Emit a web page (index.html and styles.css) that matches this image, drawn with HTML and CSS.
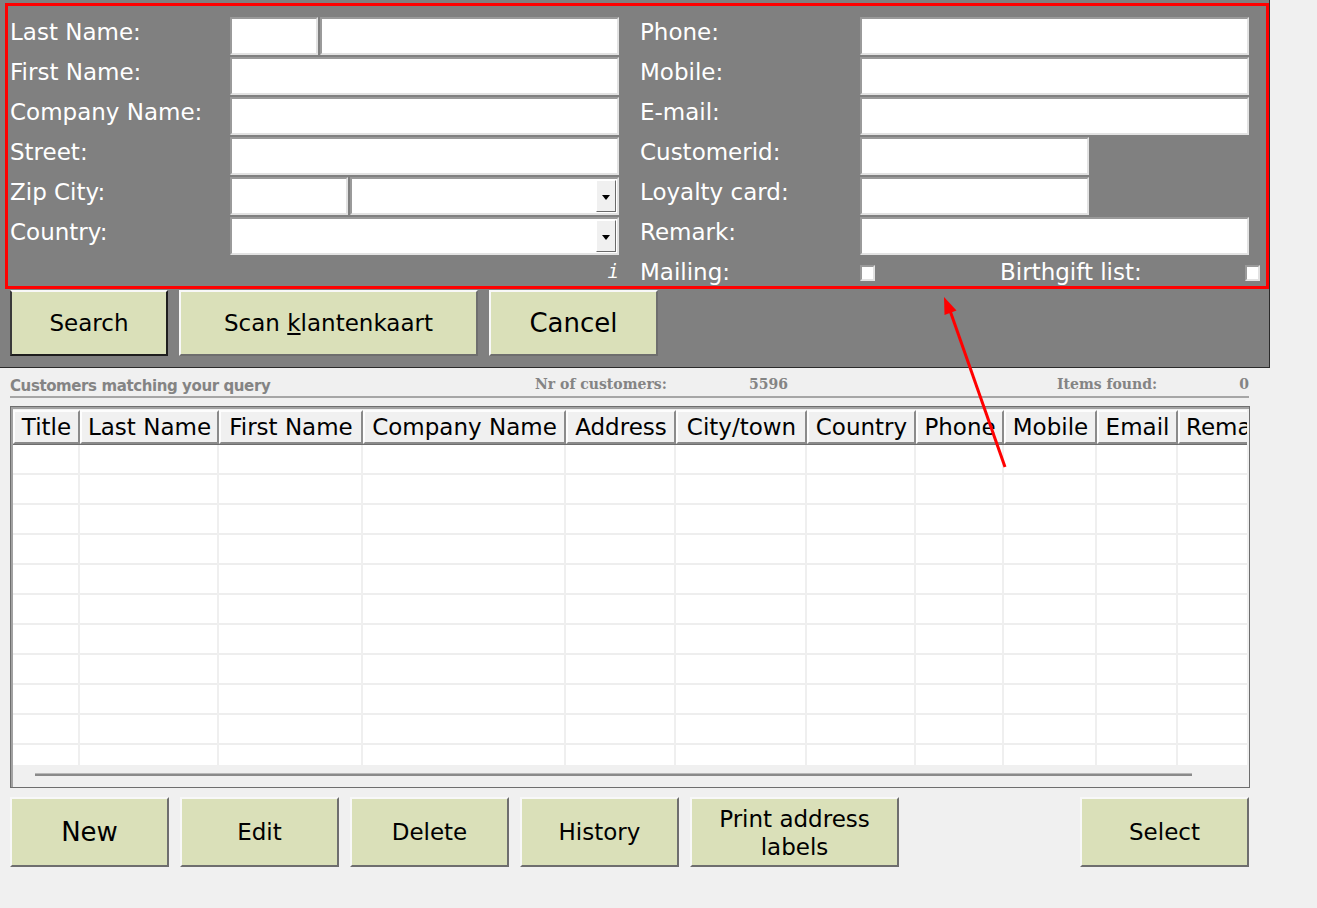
FILE: index.html
```html
<!DOCTYPE html>
<html lang="en">
<head>
    <meta charset="UTF-8" />
    <title>Customers</title>
    <link rel="stylesheet" href="styles.css">
</head>
<body>

<div class="panel">
    <div class="form">
        <div class="col">
            <label>Last Name:</label>
            <div class="pair">
                <input class="f short" type="text" />
                <input class="f" type="text" />
            </div>
            <label>First Name:</label>
            <input class="f" type="text" />
            <label>Company Name:</label>
            <input class="f" type="text" />
            <label>Street:</label>
            <input class="f" type="text" />
            <label>Zip City:</label>
            <div class="pair">
                <input class="f zip" type="text" />
                <div class="f combo"><span class="drop"></span></div>
            </div>
            <label>Country:</label>
            <div class="f combo"><span class="drop"></span></div>
            <span></span>
            <div class="info-i">i</div>
        </div>

        <div class="col">
            <label>Phone:</label>
            <input class="f" type="text" />
            <label>Mobile:</label>
            <input class="f" type="text" />
            <label>E-mail:</label>
            <input class="f" type="text" />
            <label>Customerid:</label>
            <input class="f half" type="text" />
            <label>Loyalty card:</label>
            <input class="f half" type="text" />
            <label>Remark:</label>
            <input class="f" type="text" />
            <label>Mailing:</label>
            <div class="checks">
                <span class="cb"></span>
                <label class="bg-label">Birthgift list:</label>
                <span class="cb last"></span>
            </div>
        </div>
    </div>

    <div class="actions">
        <button class="btn default w-search">Search</button>
        <button class="btn w-scan">Scan <u>k</u>lantenkaart</button>
        <button class="btn big w-cancel">Cancel</button>
    </div>
</div>

<div class="info">
    <div class="caption">Customers matching your query</div>
    <div class="stat"><span>Nr of customers:</span><span>5596</span></div>
    <div></div>
    <div class="stat"><span>Items found:</span><span>0</span></div>
</div>

<div class="grid-box">
    <div class="grid-head">
        <div class="hc" style="width:67px">Title</div>
        <div class="hc" style="width:139px">Last Name</div>
        <div class="hc" style="width:144px">First Name</div>
        <div class="hc" style="width:203px">Company Name</div>
        <div class="hc" style="width:110px">Address</div>
        <div class="hc" style="width:131px">City/town</div>
        <div class="hc" style="width:109px">Country</div>
        <div class="hc" style="width:88px">Phone</div>
        <div class="hc" style="width:93px">Mobile</div>
        <div class="hc" style="width:81px">Email</div>
        <div class="hc rema" style="width:110px">Remark</div>
    </div>
    <div class="grid-body">
        <div class="gc" style="width:67px"></div>
        <div class="gc" style="width:139px"></div>
        <div class="gc" style="width:144px"></div>
        <div class="gc" style="width:203px"></div>
        <div class="gc" style="width:110px"></div>
        <div class="gc" style="width:131px"></div>
        <div class="gc" style="width:109px"></div>
        <div class="gc" style="width:88px"></div>
        <div class="gc" style="width:93px"></div>
        <div class="gc" style="width:81px"></div>
        <div class="gc" style="width:110px"></div>
    </div>
    <div class="grid-scroll"><div class="hbar"></div></div>
</div>

<div class="bottom">
    <button class="btn big w-std">New</button>
    <button class="btn w-std">Edit</button>
    <button class="btn w-std">Delete</button>
    <button class="btn w-std">History</button>
    <button class="btn w-print">Print address<br>labels</button>
    <button class="btn w-select">Select</button>
</div>

<!-- annotation -->
<div class="mark"></div>
<svg class="arrow" width="1317" height="908" viewBox="0 0 1317 908">
    <line x1="1005" y1="467" x2="950.5" y2="312" stroke="#f00" stroke-width="3" />
    <polygon points="944,297 956.5,310.5 944.5,315" fill="#f00" />
</svg>

</body>
</html>
```

FILE: styles.css
```css
body {
    margin: 0;
    width: 1317px;
    height: 908px;
    position: relative;
    overflow: hidden;
    background: #f0f0f0;
    font-family: "DejaVu Sans", Verdana, sans-serif;
}

.panel {
    width: 1270px;
    height: 368px;
    box-sizing: border-box;
    padding-top: 17px;
    background: #808080;
    border-right: 1px solid #2b2b2b;
    border-bottom: 1px solid #2b2b2b;
}
.form {
    display: flex;
    gap: 21px;
    padding-left: 10px;
}
.col {
    display: grid;
    grid-template-columns: 220px 389px;
    grid-template-rows: repeat(6, 38px) 30px;
    row-gap: 2px;
}
.col label {
    color: #fff;
    font-size: 23px;
    line-height: 30px;
    white-space: nowrap;
}

.f {
    display: block;
    box-sizing: border-box;
    width: 100%;
    height: 38px;
    margin: 0;
    padding: 0 4px;
    border: 2px solid;
    border-color: #9a9a9a #e2e2e2 #e2e2e2 #9a9a9a;
    background: #fff;
    font: inherit;
}
.f.half { width: 229px; }
.pair {
    display: flex;
    gap: 2px;
}
.pair .short { width: 88px; flex: none; }
.pair .zip { width: 118px; flex: none; }
.pair .f:last-child { flex: 1; }

.combo { position: relative; }
.drop {
    position: absolute;
    top: 1px;
    bottom: 1px;
    right: 1px;
    width: 20px;
    box-sizing: border-box;
    background: #f0f0f0;
    border: 1px solid;
    border-color: #fff #6a6a6a #6a6a6a #fff;
}
.drop::after {
    content: '';
    position: absolute;
    left: 5px;
    top: 14px;
    border-left: 4px solid transparent;
    border-right: 4px solid transparent;
    border-top: 5px solid #000;
}

.info-i {
    color: #fff;
    font-family: "DejaVu Sans Mono", monospace;
    font-style: italic;
    font-size: 19px;
    line-height: 28px;
    text-align: right;
}

.checks {
    display: flex;
    align-items: flex-start;
    margin-right: -11px;
}
.cb {
    width: 15px;
    height: 16px;
    margin-top: 8px;
    box-sizing: border-box;
    background: #fff;
    border: 2px solid;
    border-color: #9a9a9a #e2e2e2 #e2e2e2 #9a9a9a;
    flex: none;
}
.checks .bg-label { margin-left: 125px; }
.checks .last { margin-left: auto; }

.actions {
    display: flex;
    gap: 11px;
    padding-left: 10px;
    margin-top: 3px;
}

.btn {
    box-sizing: border-box;
    height: 66px;
    padding: 0;
    background: #dae0b9;
    border: 2px solid;
    border-color: #f8f8f8 #6e6e6e #6e6e6e #f8f8f8;
    font-family: "DejaVu Sans", Verdana, sans-serif;
    font-size: 23px;
    line-height: 28px;
    color: #000;
}
.btn.big { font-size: 26px; }
.btn.default {
    border-color: #f8f8f8 #1e1e1e #1e1e1e #3a3a3a;
}
.w-search { width: 158px; }
.w-scan { width: 299px; }
.w-cancel { width: 169px; }

.info {
    display: grid;
    grid-template-columns: 525px 253px 269px 192px;
    align-items: end;
    width: 1239px;
    height: 30px;
    margin-left: 10px;
    box-sizing: border-box;
    border-bottom: 2px solid #a6a6a6;
    color: #848484;
    font-weight: bold;
    line-height: 20px;
}
.info .caption {
    font-size: 15px;
    letter-spacing: -0.4px;
}
.info .stat {
    display: flex;
    justify-content: space-between;
    align-self: start;
    padding-top: 6px;
    font-family: "DejaVu Serif", serif;
    font-size: 14px;
}

.grid-box {
    width: 1240px;
    height: 382px;
    margin: 8px 0 0 10px;
    box-sizing: border-box;
    padding: 3px 2px 0;
    border: 1px solid #6e6e6e;
    box-shadow: inset 2px 2px 0 #a2a2a2;
    background: #f0f0f0;
    overflow: hidden;
}
.grid-head {
    display: flex;
    height: 35px;
    width: 1234px;
    overflow: hidden;
    border-bottom: 1px solid #6e6e6e;
    box-sizing: border-box;
}
.hc {
    flex: none;
    box-sizing: border-box;
    border: 2px solid;
    border-color: #fdfdfd #8a8a8a #8a8a8a #fdfdfd;
    background: #f0f0f0;
    font-size: 23px;
    line-height: 30px;
    text-align: center;
    white-space: nowrap;
    overflow: hidden;
}
.hc.rema { text-align: left; padding-left: 6px; }

.grid-body {
    display: flex;
    width: 1234px;
    height: 320px;
    overflow: hidden;
    background: repeating-linear-gradient(to bottom, #fff 0 28px, #eeeeee 28px 30px);
}
.gc {
    flex: none;
    box-sizing: border-box;
    border-right: 2px solid #efefef;
}

.grid-scroll {
    height: 22px;
    padding-top: 8px;
    box-sizing: border-box;
}
.hbar {
    margin-left: 22px;
    width: 1157px;
    height: 3px;
    background: #8a8a8a;
    border-top: 1px solid #b8b8b8;
    box-sizing: border-box;
}

.bottom {
    display: flex;
    gap: 11px;
    width: 1239px;
    margin: 9px 0 0 10px;
}
.bottom .btn { height: 70px; }
.w-std { width: 159px; }
.w-print { width: 209px; padding-top: 2px; }
.w-select { width: 169px; margin-left: auto; }

/* red annotation over the form */
.mark {
    position: absolute;
    left: 5px;
    top: 3px;
    width: 1264px;
    height: 286px;
    box-sizing: border-box;
    border: 3px solid #f00;
    pointer-events: none;
}
.arrow {
    position: absolute;
    left: 0;
    top: 0;
    pointer-events: none;
}
```
